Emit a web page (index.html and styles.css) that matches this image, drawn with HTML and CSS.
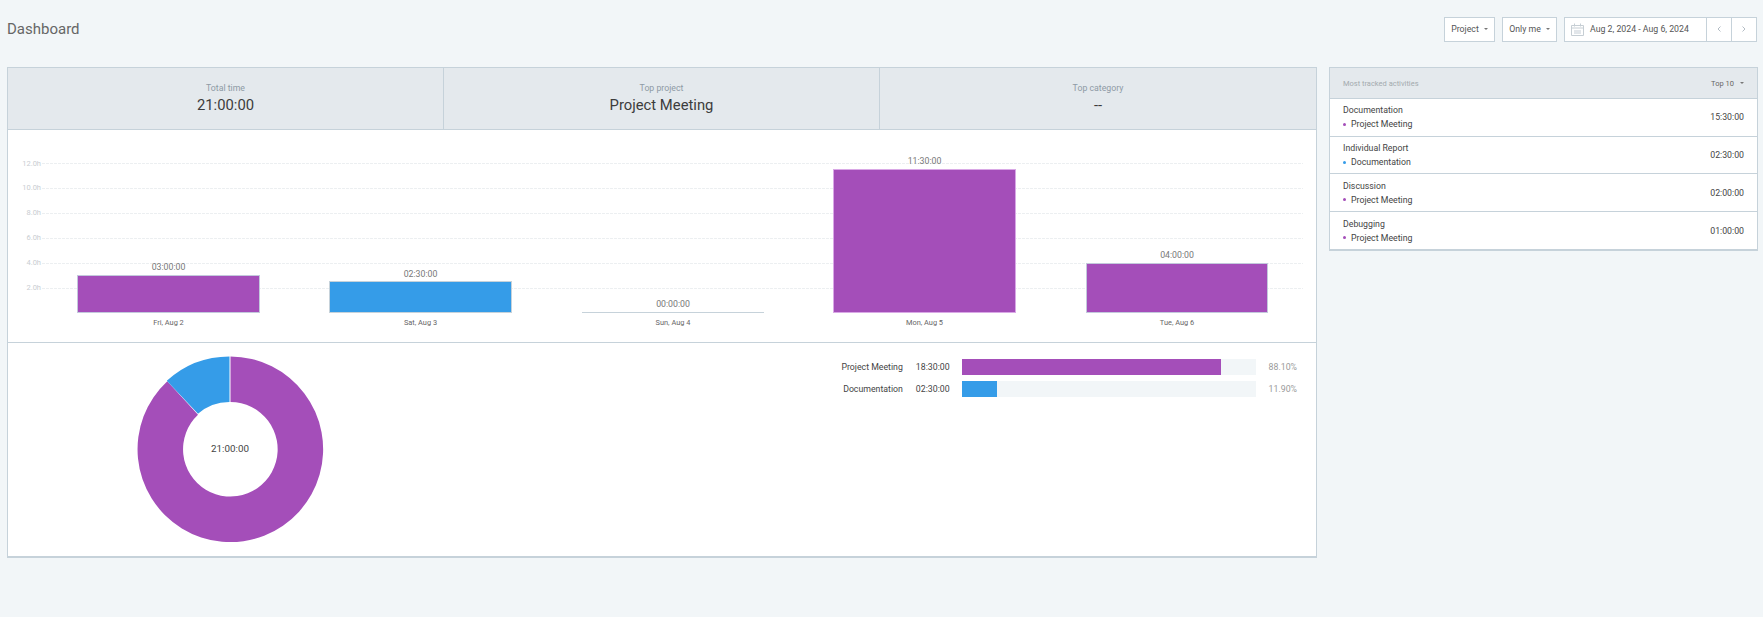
FILE: index.html
```html
<!DOCTYPE html>
<html lang="en">
<head>
    <meta charset="UTF-8">
    <title>Dashboard</title>
    <link rel="stylesheet" href="styles.css">
</head>
<body>
    <header class="topbar">
        <h1 class="page-title">Dashboard</h1>
        <div class="filters">
            <div class="filter-btn">Project <span class="caret"></span></div>
            <div class="filter-btn filter-me">Only me <span class="caret"></span></div>
            <div class="date-picker">
                <div class="date-range">
                    <svg class="cal-icon" width="13" height="13" viewBox="0 0 13 13">
                        <path d="M.5 2.500h12v10H.5zM.5 5h12M3.500 .5v3M9.500 .5v3" fill="none" stroke="#c6ced4"/>
                        <path d="M3 7h7v4H3z" fill="#e2e6ea"/>
                    </svg>
                    Aug 2, 2024 - Aug 6, 2024
                </div>
                <div class="date-nav">
                    <svg width="4" height="6" viewBox="0 0 4 6"><path d="M3.500 .5 1 3l2.500 2.500" fill="none" stroke="#b4bdc5"/></svg>
                </div>
                <div class="date-nav">
                    <svg width="4" height="6" viewBox="0 0 4 6"><path d="M.5 .5 3 3 .5 5.500" fill="none" stroke="#b4bdc5"/></svg>
                </div>
            </div>
        </div>
    </header>

    <main class="content">
        <section class="card report">
            <div class="stats">
                <div class="stat">
                    <div class="stat-label">Total time</div>
                    <div class="stat-value">21:00:00</div>
                </div>
                <div class="stat">
                    <div class="stat-label">Top project</div>
                    <div class="stat-value">Project Meeting</div>
                </div>
                <div class="stat">
                    <div class="stat-label">Top category</div>
                    <div class="stat-value">--</div>
                </div>
            </div>

            <!-- coordinates in the viewBox are page coordinates -->
            <svg class="bar-chart" width="1308" height="212" viewBox="8 130 1308 212">
                <g class="grid">
                    <path d="M42 163.500H1303M42 188.500H1303M42 213.500H1303M42 238.500H1303M42 263.500H1303M42 288.500H1303"/>
                </g>
                <g class="y-labels">
                    <text x="41" y="166">12.0h</text>
                    <text x="41" y="190">10.0h</text>
                    <text x="41" y="215">8.0h</text>
                    <text x="41" y="240">6.0h</text>
                    <text x="41" y="265">4.0h</text>
                    <text x="41" y="290">2.0h</text>
                </g>
                <rect class="bar-purple" x="77.500" y="275.500" width="182" height="37"/>
                <rect class="bar-blue" x="329.500" y="281.500" width="182" height="31"/>
                <rect class="bar-empty" x="582" y="312" width="182" height="1"/>
                <rect class="bar-purple bar-light" x="833.500" y="169.500" width="182" height="143"/>
                <rect class="bar-purple" x="1086.500" y="263.500" width="181" height="49"/>
                <g class="bar-values">
                    <text x="168.500" y="270">03:00:00</text>
                    <text x="420.500" y="277">02:30:00</text>
                    <text x="673" y="307">00:00:00</text>
                    <text x="924.500" y="164">11:30:00</text>
                    <text x="1177" y="258">04:00:00</text>
                </g>
                <g class="bar-days">
                    <text x="168.500" y="325">Fri, Aug 2</text>
                    <text x="420.500" y="325">Sat, Aug 3</text>
                    <text x="673" y="325">Sun, Aug 4</text>
                    <text x="924.500" y="325">Mon, Aug 5</text>
                    <text x="1177" y="325">Tue, Aug 6</text>
                </g>
            </svg>

            <div class="breakdown">
                <svg class="donut" width="188" height="188" viewBox="136 355 188 188">
                    <path class="slice-purple" d="M230.500 356.500a92.800 92.800 0 1 1-63.200 24.700L198 414.800a47.300 47.300 0 1 0 32.500-12.800z"/>
                    <path class="slice-blue" d="M229.500 356.500a92.800 92.800 0 0 0-62.700 24.300L198 413.800a47.300 47.300 0 0 1 31.500-11.800z"/>
                    <text class="donut-total" x="230" y="452">21:00:00</text>
                </svg>
                <div class="legend">
                    <div class="legend-name">Project Meeting</div>
                    <div class="legend-time">18:30:00</div>
                    <div class="legend-track"><div class="legend-fill fill-purple" style="width: 88.1%"></div></div>
                    <div class="legend-pct">88.10%</div>
                    <div class="legend-name">Documentation</div>
                    <div class="legend-time">02:30:00</div>
                    <div class="legend-track"><div class="legend-fill fill-blue" style="width: 11.9%"></div></div>
                    <div class="legend-pct">11.90%</div>
                </div>
            </div>
        </section>

        <aside class="card activities">
            <div class="activities-head">
                <span class="activities-title">Most tracked activities</span>
                <span class="activities-top">Top 10 <span class="caret"></span></span>
            </div>
            <div class="activity">
                <div>
                    <div class="activity-name">Documentation</div>
                    <div class="activity-project"><span class="dot dot-purple"></span>Project Meeting</div>
                </div>
                <div class="activity-time">15:30:00</div>
            </div>
            <div class="activity">
                <div>
                    <div class="activity-name">Individual Report</div>
                    <div class="activity-project"><span class="dot dot-blue"></span>Documentation</div>
                </div>
                <div class="activity-time">02:30:00</div>
            </div>
            <div class="activity">
                <div>
                    <div class="activity-name">Discussion</div>
                    <div class="activity-project"><span class="dot dot-purple"></span>Project Meeting</div>
                </div>
                <div class="activity-time">02:00:00</div>
            </div>
            <div class="activity">
                <div>
                    <div class="activity-name">Debugging</div>
                    <div class="activity-project"><span class="dot dot-purple"></span>Project Meeting</div>
                </div>
                <div class="activity-time">01:00:00</div>
            </div>
        </aside>
    </main>
</body>
</html>
```

FILE: styles.css
```css
* {
    box-sizing: border-box;
}
body {
    margin: 0;
    height: 617px;
    overflow: hidden;
    background-color: #f2f6f8;
    color: #333;
    font-family: Roboto, 'Liberation Sans', sans-serif;
    font-size: 8.75px;
}
.topbar {
    display: flex;
    justify-content: space-between;
    align-items: center;
    height: 58px;
    padding: 0 6px 0 7px;
}
.page-title {
    margin: 0;
    font-size: 15px;
    font-weight: 400;
    color: #666;
}
.filters {
    display: flex;
    gap: 7px;
}
.filter-btn {
    display: flex;
    align-items: center;
    justify-content: center;
    gap: 5px;
    width: 51px;
    height: 25px;
    background: white;
    border: 1px solid #c6d2da;
    color: #555;
}
.filter-me {
    width: 55px;
}
.caret {
    display: inline-block;
    border-left: 2px solid transparent;
    border-right: 2px solid transparent;
    border-top: 2px solid #777;
}
.date-picker {
    display: flex;
    height: 25px;
    background: white;
    border: 1px solid #c6d2da;
}
.date-range {
    display: flex;
    align-items: center;
    gap: 6px;
    width: 141px;
    padding-left: 6px;
    color: #555;
}
.date-nav {
    display: flex;
    align-items: center;
    justify-content: center;
    width: 25px;
    border-left: 1px solid #c6d2da;
}
.content {
    display: flex;
    align-items: flex-start;
    gap: 12px;
    padding: 9px 5px 0 7px;
}
.card {
    background: white;
    border: 1px solid #c6d2da;
    border-bottom-width: 2px;
}
.report {
    width: 1310px;
    height: 491px;
}
.stats {
    display: grid;
    grid-template-columns: repeat(3, 1fr);
    height: 62px;
    background: #e4e9ed;
    border-bottom: 1px solid #c6d2da;
}
.stat {
    padding-top: 13px;
    text-align: center;
    border-right: 1px solid #c6d2da;
}
.stat:last-child {
    border-right: none;
}
.stat-label {
    line-height: 14px;
    color: #8e9aa5;
}
.stat-value {
    font-size: 14.8px;
    line-height: 20px;
    color: #3c3c3c;
}
.bar-chart {
    display: block;
    box-sizing: content-box;
    border-bottom: 1px solid #c6d2da;
}
.bar-chart text {
    font-family: Roboto, 'Liberation Sans', sans-serif;
}
.grid path {
    fill: none;
    stroke: #eceff1;
    stroke-dasharray: 3 1;
}
.y-labels text {
    font-size: 7.5px;
    fill: #c9ced2;
    text-anchor: end;
}
.bar-purple {
    fill: #a44eb9;
    stroke: #c3c9dc;
}
.bar-light {
    stroke: #d9a8e6;
}
.bar-blue {
    fill: #359ce8;
    stroke: #c6d2da;
}
.bar-empty {
    fill: #c6d2da;
}
.bar-values text {
    font-size: 8.75px;
    fill: #777;
    text-anchor: middle;
}
.bar-days text {
    font-size: 7.4px;
    fill: #666;
    text-anchor: middle;
}
.breakdown {
    display: flex;
    justify-content: space-between;
    height: 213px;
}
.donut {
    display: block;
    margin: 12px 0 0 128px;
}
.slice-purple {
    fill: #a44eb9;
}
.slice-blue {
    fill: #359ce8;
}
.donut-total {
    font-family: Roboto, 'Liberation Sans', sans-serif;
    font-size: 9.8px;
    fill: #444;
    text-anchor: middle;
}
.legend {
    display: grid;
    grid-template-columns: auto auto 295px auto;
    grid-auto-rows: 16px;
    column-gap: 12px;
    row-gap: 6px;
    align-items: center;
    align-self: flex-start;
    margin-top: 16px;
    padding-right: 19px;
}
.legend-name {
    margin-right: 1px;
    text-align: right;
    color: #444;
}
.legend-time {
    color: #444;
}
.legend-track {
    height: 16px;
    margin-right: 1px;
    background: #f2f6f8;
}
.legend-fill {
    height: 100%;
}
.fill-purple {
    background: #a44eb9;
}
.fill-blue {
    background: #359ce8;
}
.legend-pct {
    color: #999;
}
.activities {
    width: 429px;
}
.activities-head {
    display: flex;
    justify-content: space-between;
    align-items: center;
    height: 31px;
    padding: 0 13px;
    background: #e4e9ed;
    border-bottom: 1px solid #c6d2da;
}
.activities-title {
    font-size: 7.5px;
    color: #a3a9ae;
}
.activities-top {
    display: flex;
    align-items: center;
    gap: 6px;
    font-size: 7.5px;
    color: #666;
}
.activity {
    display: flex;
    justify-content: space-between;
    align-items: center;
    height: 37.7px;
    padding: 0 13px;
    border-bottom: 1px solid #c6d2da;
    color: #444;
}
.activity:last-child {
    height: 37px;
    border-bottom: none;
}
.activity-name {
    line-height: 14px;
}
.activity-project {
    display: flex;
    align-items: center;
    line-height: 14px;
}
.dot {
    width: 3px;
    height: 3px;
    margin-right: 5px;
    border-radius: 50%;
}
.dot-purple {
    background: #a44eb9;
}
.dot-blue {
    background: #359ce8;
}
```
